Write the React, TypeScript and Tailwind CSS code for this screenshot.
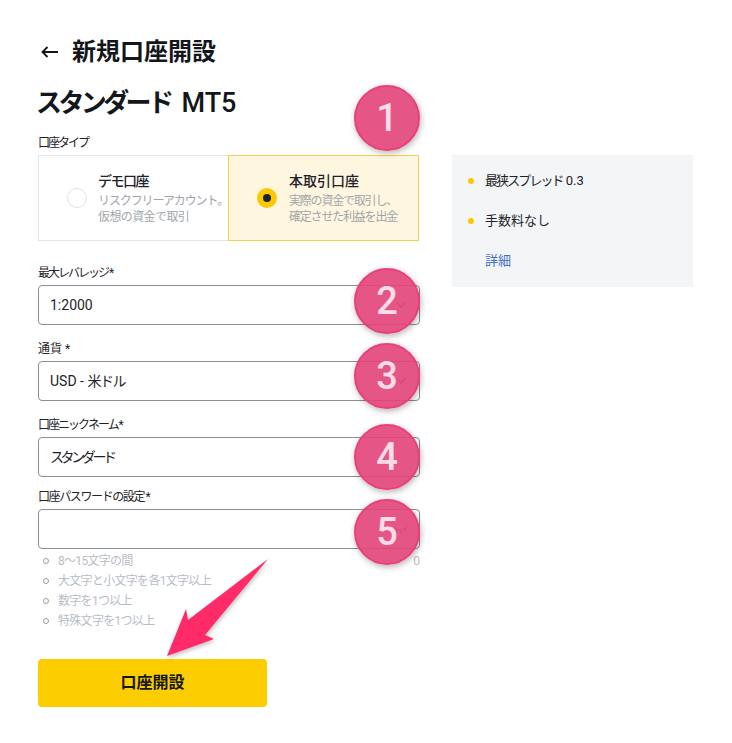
import React from 'react';
import { ChevronDown } from 'lucide-react';

const hints = ['8〜15文字の間', '大文字と小文字を各1文字以上', '数字を1つ以上', '特殊文字を1つ以上'];

const badges = [
  { n: 1, className: 'top-[85px]' },
  { n: 2, className: 'top-[268px]' },
  { n: 3, className: 'top-[343px]' },
  { n: 4, className: 'top-[424px]' },
  { n: 5, className: 'top-[499px]' },
];

const Field = ({ label, labelClass, value, icon, className }: { label: string; labelClass?: string; value?: React.ReactNode; icon?: React.ReactNode; className?: string }) => (
  <div className={className}>
    <div className={`text-[12px] leading-[16px] text-[#1e2329] h-[16px] mb-[4px] whitespace-nowrap ${labelClass ?? ''}`}>{label}</div>
    <div className="h-[40px] border border-[#8a8f96] rounded-[4px] flex items-center justify-between pl-[11px] pr-[10px] text-[14px] text-[#1e2329]">
      <span>{value}</span>
      {icon}
    </div>
  </div>
);

const EyeClosed = () => (
  <svg width="16" height="10" viewBox="0 0 16 10" fill="none" stroke="#6b7280" strokeWidth="1">
    <path d="M1 3c3 3.5 10 3.5 14 0M4 5.5L3 8M8 6.5V9M12 5.5l1 2.5" />
  </svg>
);

export default function App() {
  return (
    <div className="relative w-[732px] h-[743px] bg-white overflow-hidden font-['Roboto','Noto_Sans_CJK_JP',sans-serif]">
      <div className="flex pl-[38px] pt-[36px]">
        <div className="w-[382px]">
          <div className="flex items-center h-[32px] gap-[14px] pl-[3px]">
            <svg width="17" height="12" viewBox="0 0 17 12" fill="none" stroke="#14171a" strokeWidth="1.8">
              <path d="M17 6H1.5M6.5 1L1.5 6l5 5" />
            </svg>
            <h1 className="text-[24px] leading-[32px] font-bold text-[#14171a]">新規口座開設</h1>
          </div>
          <h2 className="mt-[17px] h-[36px] -ml-[2px] text-[26px] leading-[36px] font-bold text-[#14171a] whitespace-nowrap">
            <span className="tracking-[-3.6px]">スタンダード</span>
            <span className="ml-[11px] text-[27px] font-medium">MT5</span>
          </h2>
          <div className="mt-[14px] h-[16px] text-[12px] leading-[16px] text-[#1e2329] tracking-[-2px]">口座タイプ</div>
          <div className="mt-[4px] flex h-[86px]">
            <div className="w-[190px] border border-r-0 border-[#e5e7eb] flex items-center pl-[28px]">
              <div className="w-[20px] h-[20px] rounded-full border border-[#e0e2e5] shrink-0" />
              <div className="ml-[11px] whitespace-nowrap">
                <div className="text-[14px] leading-[20px] font-medium text-[#1e2329] tracking-[-1.5px]">デモ口座</div>
                <div className="mt-[2px] text-[12px] leading-[16px] text-[#a0a5ac]">
                  <div className="tracking-[-1.1px]">リスクフリーアカウント。</div>
                  <div className="tracking-[-0.6px]">仮想の資金で取引</div>
                </div>
              </div>
            </div>
            <div className="w-[191px] border border-[#f0d24e] bg-[#fef6de] flex items-center pl-[28px]">
              <div className="w-[20px] h-[20px] rounded-full bg-[#fcc800] flex items-center justify-center shrink-0">
                <div className="w-[8px] h-[8px] rounded-full bg-[#1e2329]" />
              </div>
              <div className="ml-[12px] whitespace-nowrap">
                <div className="text-[14px] leading-[20px] font-medium text-[#1e2329]">本取引口座</div>
                <div className="mt-[2px] text-[12px] leading-[16px] text-[#a0a5ac] tracking-[-1.2px]">
                  <div>実際の資金で取引し、</div>
                  <div>確定させた利益を出金</div>
                </div>
              </div>
            </div>
          </div>
          <Field
            className="mt-[24px]"
            label="最大レバレッジ *"
            labelClass="tracking-[-2px]"
            value="1:2000"
            icon={<ChevronDown size={16} className="text-[#6b7280]" />}
          />
          <Field
            className="mt-[16px]"
            label="通貨 *"
            value={<>USD - <span className="tracking-[-1.5px]">米ドル</span></>}
            icon={<ChevronDown size={16} className="text-[#6b7280]" />}
          />
          <Field
            className="mt-[16px]"
            label="口座ニックネーム *"
            labelClass="tracking-[-2px]"
            value={<span className="tracking-[-3.4px]">スタンダード</span>}
          />
          <Field className="mt-[12px]" label="口座パスワードの設定 *" labelClass="tracking-[-1.4px]" icon={<EyeClosed />} />
          <div className="relative mt-[2px] text-[12px] leading-[20px] text-[#b7bdc6]">
            {hints.map(hint => (
              <div key={hint} className="flex items-center h-[20px] pl-[5px] tracking-[-0.7px]">
                <span className="w-[6px] h-[6px] rounded-full border border-[#9a9fa6] mr-[9px]" />
                {hint}
              </div>
            ))}
            <span className="absolute right-0 top-0">0</span>
          </div>
          <button className="mt-[28px] w-[229px] h-[48px] rounded-[4px] bg-[#fccd00] text-[16px] font-bold text-[#14171a]">
            口座開設
          </button>
        </div>
        <div className="ml-[32px] mt-[119px] w-[241px] h-[132px] bg-[#f4f5f7] pl-[16px] pt-[16px] text-[13px] leading-[20px] text-[#1e2329]">
          <div className="flex items-center h-[20px]">
            <span className="w-[6px] h-[6px] rounded-full bg-[#fcc800] mr-[11px]" />
            <span className="tracking-[-1.9px]">最狭スプレッド</span>
            <span className="ml-[3px]">0.3</span>
          </div>
          <div className="flex items-center h-[20px] mt-[20px]">
            <span className="w-[6px] h-[6px] rounded-full bg-[#fcc800] mr-[11px]" />手数料なし
          </div>
          <div className="h-[20px] mt-[20px] pl-[17px] text-[#3f6fca]">詳細</div>
        </div>
      </div>

      {/* Annotations on top of the screenshot */}
      {badges.map(b => (
        <div
          key={b.n}
          className={`absolute left-[354px] w-[66px] h-[66px] rounded-full bg-[#e2447a]/90 border-2 border-[#ea3f76] shadow-[1px_2px_6px_rgba(0,0,0,0.3)] flex items-center justify-center text-[38px] font-medium text-[#fcdce6] ${b.className}`}
        >
          {b.n}
        </div>
      ))}
      <svg className="absolute left-0 top-0 pointer-events-none" width="732" height="743" viewBox="0 0 732 743">
        <polygon
          points="167,656 186,609 188,620 268,559 205,635 214,639"
          fill="#ff2a68"
          style={{ filter: 'drop-shadow(1px 2px 2px rgba(0,0,0,0.25))' }}
        />
      </svg>
    </div>
  );
}
